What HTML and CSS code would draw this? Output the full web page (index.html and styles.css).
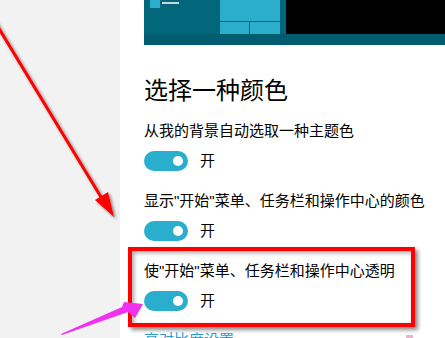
FILE: index.html
```html
<!DOCTYPE html>
<html lang="zh-CN">
<head>
<meta charset="utf-8">
<title>颜色</title>
<link rel="stylesheet" href="styles.css">
</head>
<body>
<div class="page">
  <aside class="sidebar"></aside>
  <main class="main">
    <div class="preview">
      <div class="preview-top">
        <div class="start">
          <div class="start-list">
            <span class="mini-tile"></span>
            <span class="mini-line"></span>
          </div>
          <div class="tiles">
            <span class="tile tile-wide"></span>
            <span class="tile"></span>
            <span class="tile"></span>
          </div>
        </div>
        <div class="desktop"></div>
      </div>
      <div class="taskbar"></div>
    </div>

    <h1 class="heading">选择一种颜色</h1>

    <div class="setting">
      <div class="label">从我的背景自动选取一种主题色</div>
      <div class="toggle-row"><span class="toggle"><span class="knob"></span></span><span class="state">开</span></div>
    </div>

    <div class="setting">
      <div class="label">显示"开始"菜单、任务栏和操作中心的颜色</div>
      <div class="toggle-row"><span class="toggle"><span class="knob"></span></span><span class="state">开</span></div>
    </div>

    <div class="setting highlight">
      <div class="label">使"开始"菜单、任务栏和操作中心透明</div>
      <div class="toggle-row"><span class="toggle"><span class="knob"></span></span><span class="state">开</span></div>
    </div>

    <a class="link">高对比度设置</a>
  </main>
</div>

<svg class="annotations" width="445" height="338" viewBox="0 0 445 338" xmlns="http://www.w3.org/2000/svg">
  <defs>
    <filter id="shadow" x="-20%" y="-20%" width="140%" height="140%">
      <feDropShadow dx="2" dy="2" stdDeviation="1.5" flood-color="#000" flood-opacity="0.45"/>
    </filter>
  </defs>
  <g filter="url(#shadow)">
    <line x1="-8" y1="17" x2="104" y2="202" stroke="#ff0000" stroke-width="3"/>
    <polygon points="114,217 95,200 108,192" fill="#ff0000"/>
  </g>
  <polygon points="61,334 122,307 124,302 143,304 135,318 128,312 62,335" fill="#f032f0"/>
  <rect x="406" y="335" width="7" height="3" fill="#e6b4cc"/>
</svg>
</body>
</html>
```
FILE: styles.css
```css
html, body {
  margin: 0;
  padding: 0;
}
body {
  width: 445px;
  height: 338px;
  overflow: hidden;
  position: relative;
  background: #ffffff;
  font-family: "Liberation Sans", "Noto Sans CJK SC", sans-serif;
  color: #000;
}
.page {
  display: flex;
  height: 338px;
}
.sidebar {
  width: 120px;
  flex: none;
  background: #f2f2f2;
}
.main {
  flex: 1;
  display: flex;
  flex-direction: column;
  padding-left: 24px;
  min-width: 0;
}
.preview {
  height: 45px;
  display: flex;
  flex-direction: column;
  flex: none;
}
.preview-top {
  height: 34px;
  display: flex;
}
.start {
  width: 142px;
  background: #03677c;
  display: flex;
}
.start-list {
  width: 76px;
  display: flex;
  align-items: flex-start;
  padding-left: 6px;
  box-sizing: border-box;
}
.mini-tile {
  width: 10px;
  height: 8px;
  background: #2aaecb;
}
.mini-line {
  width: 17px;
  height: 2px;
  margin-left: 2px;
  margin-top: 2px;
  background: #c9d6da;
}
.tiles {
  width: 60px;
  display: grid;
  grid-template-columns: 29px 30px;
  grid-template-rows: 21px 12px;
  gap: 1px;
}
.tile {
  background: #2aaecb;
}
.tile-wide {
  grid-column: 1 / 3;
}
.desktop {
  flex: 1;
  background: #000;
}
.taskbar {
  height: 11px;
  background: #025c6f;
}
.heading {
  margin: 28px 0 16px;
  font-size: 24px;
  line-height: 32px;
  font-weight: 400;
  font-family: "Noto Sans CJK SC", sans-serif;
}
.setting {
  margin-bottom: 20px;
}
.label {
  font-size: 15px;
  line-height: 20px;
  margin-bottom: 10px;
  white-space: nowrap;
}
.toggle-row {
  display: flex;
  align-items: center;
  height: 20px;
}
.toggle {
  width: 44px;
  height: 20px;
  border-radius: 10px;
  background: #29afcd;
  display: flex;
  align-items: center;
  justify-content: flex-end;
  padding-right: 5px;
  box-sizing: border-box;
}
.knob {
  width: 10px;
  height: 10px;
  border-radius: 50%;
  background: #fff;
}
.state {
  margin-left: 12px;
  font-size: 15px;
  line-height: 20px;
}
.highlight {
  margin: -14px 0 0 -16px;
  width: 287px;
  box-sizing: border-box;
  border: 4px solid #ff0000;
  padding: 10px 12px 12px;
  box-shadow: 3px 3px 4px rgba(0, 0, 0, 0.45), inset 2px 2px 4px rgba(0, 0, 0, 0.35);
}
.link {
  margin-top: 3px;
  font-size: 15px;
  line-height: 20px;
  color: #2b9bd4;
}
.annotations {
  position: absolute;
  left: 0;
  top: 0;
  pointer-events: none;
}
```
